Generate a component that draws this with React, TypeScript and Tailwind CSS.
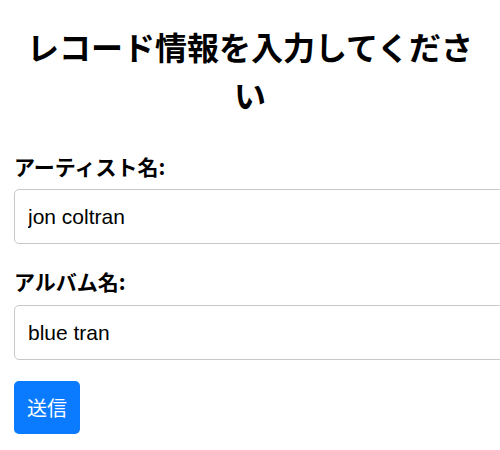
export default function App() {
  const font = { fontFamily: '"Noto Sans CJK JP", "Liberation Sans", sans-serif' };
  const latin = { fontFamily: '"Liberation Sans", "Noto Sans CJK JP", sans-serif' };
  return (
    <div className="w-[500px] h-[450px] overflow-hidden bg-white text-black px-[14px]" style={font}>
      <h1 className="pt-[22px] text-center text-[32px] leading-[48px] font-bold">
        レコード情報を入力してください
      </h1>
      <form className="pt-[33px]" onSubmit={(e) => e.preventDefault()}>
        <label className="block text-[21px] leading-[31px] font-bold mb-[7px]">アーティスト名:</label>
        <input
          defaultValue="jon coltran"
          className="block w-[520px] h-[55px] px-[13px] text-[21px] border border-[#c8c8c8] rounded-[5px] outline-none"
          style={latin}
        />
        <label className="block mt-[22px] text-[21px] leading-[31px] font-bold mb-2">アルバム名:</label>
        <input
          defaultValue="blue tran"
          className="block w-[520px] h-[55px] px-[13px] text-[21px] border border-[#c8c8c8] rounded-[5px] outline-none"
          style={latin}
        />
        <button
          type="submit"
          className="mt-[21px] w-[66px] h-[53px] text-[20px] leading-[30px] text-white bg-[#0a7bff] rounded-[5px] text-center"
        >
          送信
        </button>
      </form>
    </div>
  );
}
